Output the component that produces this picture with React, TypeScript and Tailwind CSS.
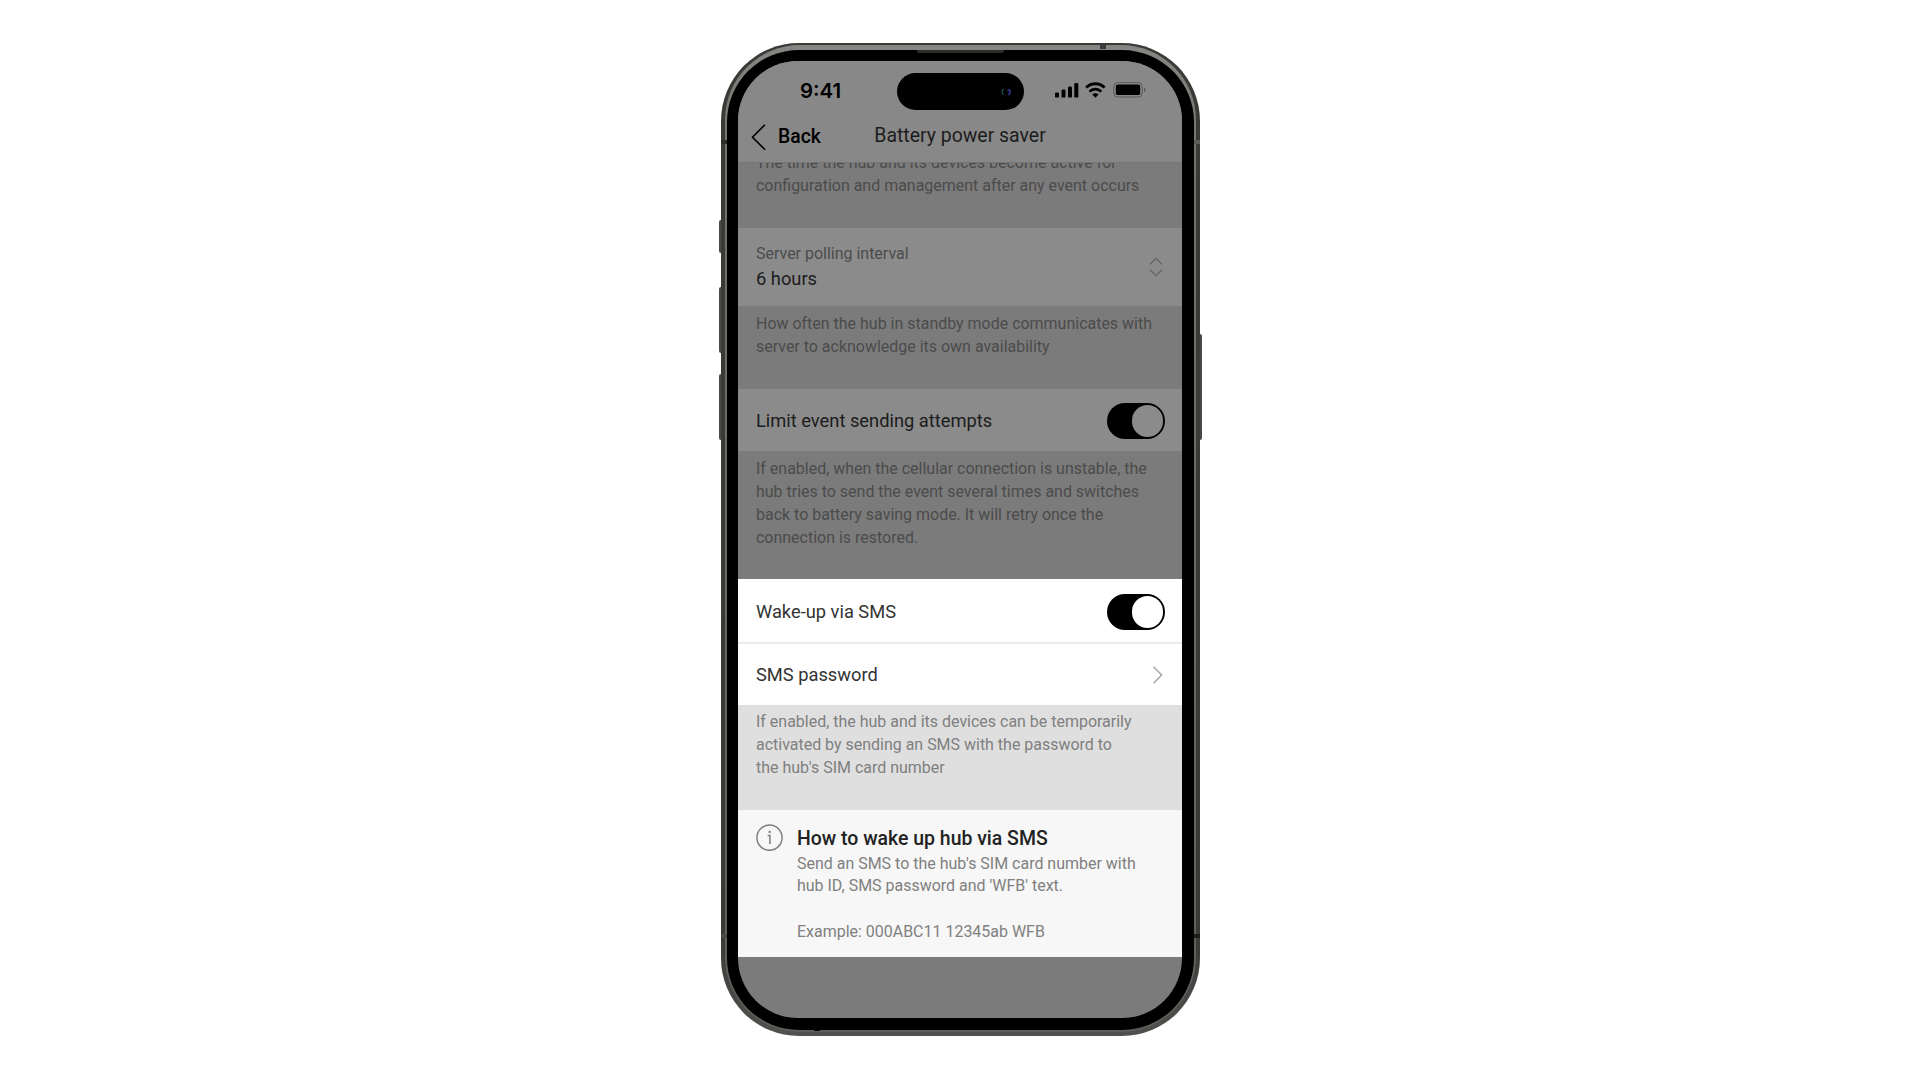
import { clsx } from "clsx";
import type { ReactNode } from "react";

const Toggle = ({ dimmed = false }: { dimmed?: boolean }) => (
  <button
    role="switch"
    aria-checked="true"
    className="flex h-[36px] w-[58px] items-center justify-end rounded-full bg-black pr-[2px]"
  >
    <span className={clsx("size-[31.5px] rounded-full", dimmed ? "bg-[#8b8b8b]" : "bg-white")} />
  </button>
);

const Hint = ({ className, children }: { className?: string; children: ReactNode }) => (
  <p
    className={clsx("px-[18px] text-[15.97px] leading-[22.85px] whitespace-pre", className)}
  >
    {children}
  </p>
);

const StatusBar = () => (
  <div className="flex h-[56px] items-start pt-[12px] pr-[36px] pl-[62px]">
    <span className="mt-[5px] w-[97px] font-[Inter] text-[20.4px] leading-[26px] font-semibold">
      9:41
    </span>
    {/* Dynamic island */}
    <div className="flex h-[37px] w-[127px] items-center justify-end rounded-full bg-black pr-[12px]">
      <svg width="12" height="8" viewBox="0 0 12 8" fill="none">
        <path d="M4 1.2C1.5 1.5 1.5 6 4 6.6" stroke="#164546" strokeWidth="1.4" />
        <path d="M8.6 1C10.6 2 10.6 5.5 8.4 7" stroke="#30308c" strokeWidth="1.8" />
        <circle cx="8" cy="2.6" r="0.9" fill="#22405e" />
      </svg>
    </div>
    <svg className="mt-[9px] ml-auto" width="92" height="20" viewBox="0 0 92 20" fill="none">
      <g fill="#000">
        <rect x="1" y="10.6" width="4" height="5" rx="1.2" />
        <rect x="7.5" y="7.6" width="4" height="8" rx="1.2" />
        <rect x="14" y="4.6" width="4" height="11" rx="1.2" />
        <rect x="20.3" y="1.1" width="4" height="14.5" rx="1.2" />
      </g>
      <path d="M32.2 5.6a13 13 0 0 1 18.4 0" stroke="#000" strokeWidth="2.9" />
      <path d="M35.5 9.6a8.3 8.3 0 0 1 11.8 0" stroke="#000" strokeWidth="2.7" />
      <path d="M41.4 15.8 38.3 12.5a4.4 4.4 0 0 1 6.2 0z" fill="#000" />
      <rect x="59.7" y="0.6" width="28.6" height="14.4" rx="4" stroke="#5a5a5a" />
      <rect x="61.8" y="2.6" width="24.4" height="10.4" rx="1.8" fill="#000" />
      <path d="M90 5.6v4.6c2-.8 2-3.8 0-4.6z" fill="#5a5a5a" />
    </svg>
  </div>
);

const Screen = () => (
  <div className="flex h-[957px] w-[444px] flex-col overflow-hidden rounded-[60px] bg-[#7b7b7b] font-[Roboto] text-[#1c1c1c]">
    <header className="h-[102px] shrink-0 border-b border-[#757575] bg-[#888] text-black">
      <StatusBar />
      <div className="grid grid-cols-[1fr_auto_1fr] items-center px-[12px]">
        <button className="flex items-center pt-[2px] text-[19.35px] leading-[36px] font-medium">
          <svg className="mr-[11px]" width="17" height="28" viewBox="0 0 17 28" fill="none">
            <path d="M15 1.7 2.5 14.2 15 26.7" stroke="#000" strokeWidth="1.6" />
          </svg>
          Back
        </button>
        <h1 className="text-[19.45px] leading-[34px] text-[#1c1c1c]">Battery power saver</h1>
      </div>
    </header>

    <section className="h-[65px] shrink-0 overflow-hidden text-[#4b4b4b]">
      <Hint className="-mt-[11px]">
        {"The time the hub and its devices become active for\nconfiguration and management after any event occurs"}
      </Hint>
    </section>

    <section className="flex h-[78px] shrink-0 items-center justify-between bg-[#8b8b8b] pr-[19px] pl-[18px]">
      <div>
        <div className="text-[15.97px] leading-[23px] text-[#4b4b4b]">Server polling interval</div>
        <div className="text-[18.3px] leading-[27px]">6 hours</div>
      </div>
      <svg width="14" height="20" viewBox="0 0 14 20" fill="none" stroke="#656565" strokeWidth="1.3">
        <path d="M1 7.3 7 1.3 13 7.3M1 12.7 7 18.7 13 12.7" />
      </svg>
    </section>

    <section className="h-[83px] shrink-0 pt-[7px] text-[#4b4b4b]">
      <Hint>
        {"How often the hub in standby mode communicates with\nserver to acknowledge its own availability"}
      </Hint>
    </section>

    <section className="flex h-[62px] shrink-0 items-center justify-between bg-[#8b8b8b] pt-[2px] pr-[17px] pl-[18px] text-[18.3px]">
      Limit event sending attempts
      <Toggle dimmed />
    </section>

    <section className="h-[128px] shrink-0 pt-[7px] text-[#4b4b4b]">
      <Hint>
        {"If enabled, when the cellular connection is unstable, the\nhub tries to send the event several times and switches\nback to battery saving mode. It will retry once the\nconnection is restored."}
      </Hint>
    </section>

    {/* Highlighted settings */}
    <section className="shrink-0 bg-white text-[18.3px] text-[#333]">
      <div className="flex h-[65px] items-center justify-between border-b-2 border-[#ebebeb] pt-[3px] pr-[17px] pl-[18px]">
        Wake-up via SMS
        <Toggle />
      </div>
      <div className="flex h-[61px] items-center justify-between pr-[19px] pl-[18px]">
        SMS password
        <svg width="11" height="18" viewBox="0 0 11 18" fill="none">
          <path d="M1.5 .8 9.7 9 1.5 17.2" stroke="#a8a8a8" strokeWidth="1.5" />
        </svg>
      </div>
    </section>

    <section className="h-[105px] shrink-0 bg-[#dfdfdf] pt-[6px] text-[#808080]">
      <Hint>
        {"If enabled, the hub and its devices can be temporarily\nactivated by sending an SMS with the password to\nthe hub's SIM card number"}
      </Hint>
    </section>

    <section className="flex h-[147px] shrink-0 bg-[#f7f7f7] pt-[14px] pl-[18px]">
      <svg className="shrink-0" width="27" height="27" viewBox="0 0 27 27" fill="none" stroke="#7f7f7f" strokeWidth="1.5">
        <circle cx="13.5" cy="13.7" r="12.6" />
        <path d="M11.6 11.5h2.3v8.6" />
        <circle cx="13.7" cy="7.9" r="1.2" fill="#7f7f7f" stroke="none" />
      </svg>
      <div className="-ml-[4px]">
        <h2 className="px-[18px] text-[19.45px] leading-[29px] font-medium text-[#222]">
          How to wake up hub via SMS
        </h2>
        <Hint className="-mt-[0.4px] text-[#808080]">
          {"Send an SMS to the hub's SIM card number with\nhub ID, SMS password and 'WFB' text.\n\nExample: 000ABC11 12345ab WFB"}
        </Hint>
      </div>
    </section>
  </div>
);

export default function App() {
  return (
    <main className="flex h-screen justify-center overflow-hidden bg-white pt-[43px]">
      <div className="relative h-[993px] w-[479px]">
        {/* Side buttons */}
        <div className="absolute top-[177px] -left-[2px] h-[33px] w-[4px] rounded-l-[2px] bg-[#4a4a47]" />
        <div className="absolute top-[244px] -left-[2px] h-[66px] w-[4px] rounded-l-[2px] bg-[#4a4a47]" />
        <div className="absolute top-[331px] -left-[2px] h-[66px] w-[4px] rounded-l-[2px] bg-[#4a4a47]" />
        <div className="absolute top-[291px] -right-[2px] h-[106px] w-[4px] rounded-r-[2px] bg-[#4a4a4a]" />

        <div className="relative h-full rounded-[78px] bg-linear-to-b from-[#3a3a38] from-90% to-[#53514f] px-[4px] pt-[2px] pb-[4px]">
          <div className="h-full rounded-[75px] bg-linear-to-b from-[#858782] from-0% via-[#74726d] via-10% to-[#5f5d5a] px-[2px] pt-[5px] pb-[2px]">
            <div className="flex h-full items-start justify-center rounded-[72px] bg-black pt-[11px]">
              <Screen />
            </div>
          </div>
        </div>

        {/* Antenna bands and earpiece */}
        <div className="absolute top-[97px] left-0 h-[4px] w-[6px] bg-[#2b2b29]" />
        <div className="absolute top-[97px] right-0 h-[4px] w-[6px] bg-[#5c5b57]" />
        <div className="absolute top-[891px] left-0 h-[4px] w-[6px] bg-[#4b4a48]" />
        <div className="absolute top-[891px] right-0 h-[4px] w-[6px] bg-[#1f1f1e]" />
        <div className="absolute top-[2px] left-[379px] h-[4px] w-[6px] bg-[#3a3a38]" />
        <div className="absolute top-[985px] left-[92px] h-[3px] w-[8px] rounded-b-full bg-black" />
        <div className="absolute top-[7px] left-[196px] h-[3px] w-[87px] rounded-b-[2px] bg-[#2b2b2a]" />
      </div>
    </main>
  );
}
